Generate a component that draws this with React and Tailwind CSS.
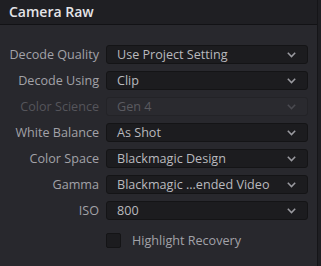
import React from 'react'

const rows = [
  { label: 'Decode Quality', value: 'Use Project Setting' },
  { label: 'Decode Using', value: 'Clip' },
  { label: 'Color Science', value: 'Gen 4', disabled: true },
  { label: 'White Balance', value: 'As Shot' },
  { label: 'Color Space', value: 'Blackmagic Design' },
  { label: 'Gamma', value: 'Blackmagic ...ended Video' },
  { label: 'ISO', value: '800' },
]

const Chevron = ({ disabled }) => (
  <svg width="9" height="6" viewBox="0 0 9 6" className="shrink-0">
    <path
      d="M0.8 0.8 L4.5 4.6 L8.2 0.8"
      fill="none"
      stroke={disabled ? '#4a4a50' : '#9a9aa0'}
      strokeWidth="1.5"
    />
  </svg>
)

const Select = ({ value, disabled }) => (
  <div
    className={`flex h-[19px] w-[202px] items-center justify-between rounded-[3px] border pl-[10px] pr-[11px] ${
      disabled
        ? 'border-[#232327] bg-[#2a2a2f] text-[#5a5a60]'
        : 'border-[#141416] bg-[#1c1c1f] text-[#b9b9be]'
    }`}
  >
    <span className="whitespace-nowrap leading-[17px]">{value}</span>
    <Chevron disabled={disabled} />
  </div>
)

export default function App() {
  return (
    <div
      className="flex h-[266px] w-[321px] bg-[#1f1f23] text-[12.6px]"
      style={{ fontFamily: '"Open Sans", "Noto Sans", sans-serif' }}
    >
      <div className="flex w-[318px] flex-col border-r border-[#151518]">
        <div className="flex h-[25px] items-center border-b border-[#121215] bg-[#1f1f23] pl-[9px]">
          <span className="text-[14px] font-semibold leading-[20px] text-[#e4e4e8]">Camera Raw</span>
        </div>

        <div className="flex flex-1 flex-col bg-[#28282d] pt-[20px]">
          <div className="flex flex-col gap-[7px]">
            {rows.map((r) => (
              <div key={r.label} className="flex items-center gap-[7px]">
                <span
                  className={`w-[99px] text-right leading-[17px] ${
                    r.disabled ? 'text-[#55555b]' : 'text-[#a2a2a8]'
                  }`}
                >
                  {r.label}
                </span>
                <Select value={r.value} disabled={r.disabled} />
              </div>
            ))}
          </div>

          <div className="mt-[12px] flex items-center gap-[11px] pl-[106px]">
            <div className="h-[15px] w-[15px] rounded-[2px] border border-[#141416] bg-[#1c1c1f]" />
            <span className="leading-[17px] text-[#a2a2a8]">Highlight Recovery</span>
          </div>
        </div>
      </div>
    </div>
  )
}
